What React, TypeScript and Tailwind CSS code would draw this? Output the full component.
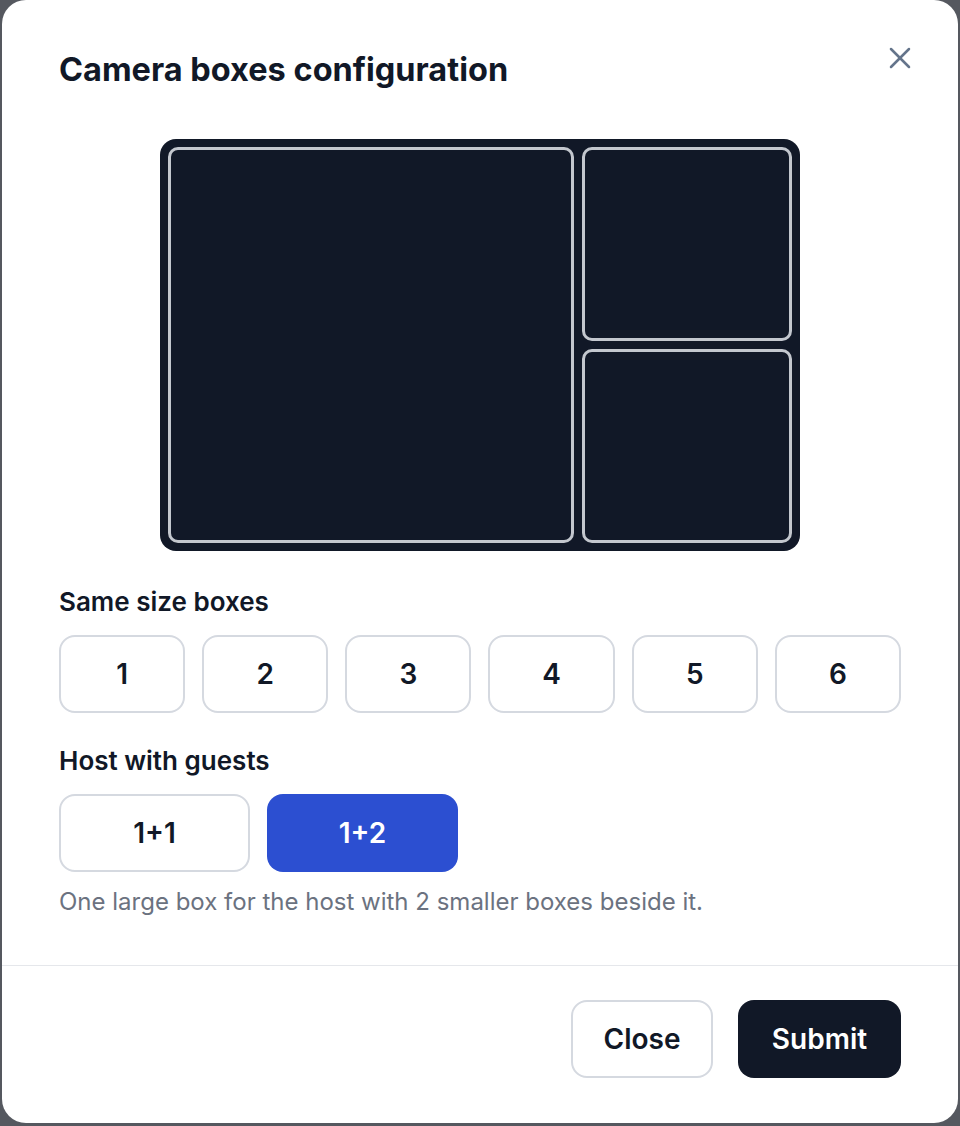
import { useState } from "react";

const SAME = ["1", "2", "3", "4", "5", "6"];
const HOST = ["1+1", "1+2"];

export default function App() {
  const [same, setSame] = useState<string | null>(null);
  const [host, setHost] = useState<string | null>("1+2");
  return (
    <div className="h-[1126px] bg-[#55585f] px-[2px] font-['Inter','Noto_Sans',sans-serif] text-[#111827]">
      <div className="relative flex h-[1123px] flex-col rounded-[24px] bg-white">
        <button className="absolute right-[40px] top-[40px] flex h-9 w-9 items-center justify-center text-[#64748b]">
          <svg width="36" height="36" viewBox="0 0 24 24" fill="none" stroke="currentColor" strokeWidth="1.7" strokeLinecap="round">
            <path d="M18 6 6 18" />
            <path d="m6 6 12 12" />
          </svg>
        </button>

        <div className="px-[57px] pt-[50px]">
          <h1 className="text-[32.5px] font-bold leading-10">Camera boxes configuration</h1>

          <div className="mx-auto mt-[49px] flex h-[412px] w-[640px] gap-2 rounded-[16px] bg-[#111827] p-2">
            <div className="w-[406px] rounded-[10px] border-[3px] border-[#c3c7ce]" />
            <div className="flex flex-1 flex-col gap-2">
              <div className="flex-1 rounded-[10px] border-[3px] border-[#c3c7ce]" />
              <div className="flex-1 rounded-[10px] border-[3px] border-[#c3c7ce]" />
            </div>
          </div>

          <div className="mt-[35px] text-[26px] font-semibold leading-8">Same size boxes</div>
          <div className="mt-[17px] grid grid-cols-6 gap-[17px]">
            {SAME.map((n) => (
              <button
                key={n}
                onClick={() => { setSame(n); setHost(null); }}
                className={"h-[78px] rounded-[16px] text-[28px] font-semibold " + (same === n ? "bg-[#2c4fd1] text-white" : "border-2 border-[#d5d9e0] bg-white")}
              >
                {n}
              </button>
            ))}
          </div>

          <div className="mt-[32px] text-[26px] font-semibold leading-8">Host with guests</div>
          <div className="mt-[17px] flex gap-[17px]">
            {HOST.map((h) => (
              <button
                key={h}
                onClick={() => { setHost(h); setSame(null); }}
                className={"h-[78px] w-[191px] rounded-[16px] text-[28px] font-semibold " + (host === h ? "bg-[#2c4fd1] text-white" : "border-2 border-[#d5d9e0] bg-white")}
              >
                {h}
              </button>
            ))}
          </div>

          <p className="mt-[14px] text-[24px] leading-8 text-[#6b7280]">One large box for the host with 2 smaller boxes beside it.</p>
        </div>

        <div className="mt-auto flex h-[158px] items-start justify-end gap-[25px] border-t border-[#e5e7eb] px-[57px] pt-[34px]">
          <button className="h-[78px] w-[142px] rounded-[16px] border-2 border-[#d5d9e0] bg-white text-[28px] font-semibold">Close</button>
          <button className="h-[78px] w-[163px] rounded-[16px] bg-[#111827] text-[28px] font-semibold text-white">Submit</button>
        </div>
      </div>
    </div>
  );
}
